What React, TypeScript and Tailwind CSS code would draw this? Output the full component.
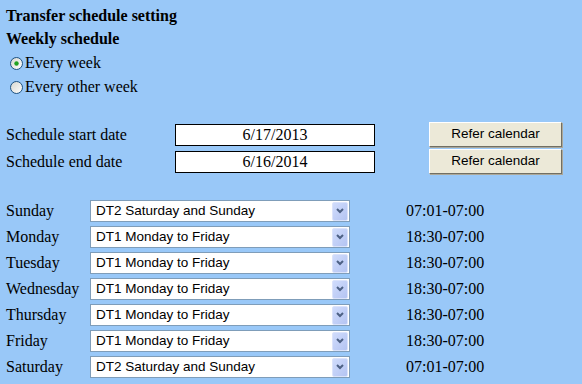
import { ReactNode } from "react";

type DayRow = {
  day: string;
  pattern: string;
  time: string;
};

const DAYS: DayRow[] = [
  { day: "Sunday", pattern: "DT2 Saturday and Sunday", time: "07:01-07:00" },
  { day: "Monday", pattern: "DT1 Monday to Friday", time: "18:30-07:00" },
  { day: "Tuesday", pattern: "DT1 Monday to Friday", time: "18:30-07:00" },
  { day: "Wednesday", pattern: "DT1 Monday to Friday", time: "18:30-07:00" },
  { day: "Thursday", pattern: "DT1 Monday to Friday", time: "18:30-07:00" },
  { day: "Friday", pattern: "DT1 Monday to Friday", time: "18:30-07:00" },
  { day: "Saturday", pattern: "DT2 Saturday and Sunday", time: "07:01-07:00" },
];

const serif = "font-['Liberation_Serif','Times_New_Roman',serif]";
const sans = "font-['Liberation_Sans',Arial,sans-serif]";

function Radio({ checked, children }: { checked?: boolean; children: ReactNode }) {
  const id = checked ? "rg1" : "rg2";
  return (
    <label className="flex h-[24px] items-center">
      <svg width="13" height="13" viewBox="0 0 13 13" className="ml-[4px] mr-[2px]">
        <defs>
          <linearGradient id={id} x1="0" y1="0" x2="1" y2="1">
            <stop offset="0" stopColor="#d6d6ce" />
            <stop offset="1" stopColor="#ffffff" />
          </linearGradient>
        </defs>
        <circle cx="6.5" cy="6.5" r="6" fill={`url(#${id})`} stroke="#1c5180" strokeWidth="1" />
        {checked && <circle cx="6.5" cy="6.5" r="2.2" fill="#21a121" />}
      </svg>
      <span>{children}</span>
    </label>
  );
}

function DateRow({ label, value }: { label: string; value: string }) {
  return (
    <div className="flex h-[27px] items-center">
      <span className="w-[169px]">{label}</span>
      <div className="flex h-[22px] w-[200px] items-center justify-center border border-black bg-white">
        {value}
      </div>
      <button
        className={`${sans} ml-[54px] h-[25px] w-[133px] border border-t-white border-l-white border-r-[#716f64] border-b-[#716f64] bg-[#ece9d8] text-[13.5px] text-black shadow-[1px_1px_0_#aca899]`}
      >
        Refer calendar
      </button>
    </div>
  );
}

function FakeSelect({ value }: { value: string }) {
  return (
    <div className="flex h-[22px] w-[260px] items-center border border-[#7f9db9] bg-white p-px">
      <span className={`${sans} flex-1 pl-[4px] text-[13.5px] text-black`}>{value}</span>
      <div className="flex h-[19px] w-[16px] items-center justify-center rounded-[2px] border border-[#dbe3fb] bg-gradient-to-br from-[#d0dcfc] to-[#b4c4f2]">
        <svg width="8" height="6" viewBox="0 0 8 6">
          <path d="M1 1 L4 4 L7 1" fill="none" stroke="#4d6185" strokeWidth="2" />
        </svg>
      </div>
    </div>
  );
}

export default function App() {
  return (
    <div className={`${serif} min-h-[384px] w-full bg-[#99c8f8] px-[6px] pt-[4px] text-[16px] text-black`}>
      <h1 className="h-[23px] font-bold leading-[23px]">Transfer schedule setting</h1>
      <h2 className="h-[23px] font-bold leading-[23px]">Weekly schedule</h2>

      <div className="mt-px">
        <Radio checked>Every week</Radio>
        <Radio>Every other week</Radio>
      </div>

      <div className="mt-[22px]">
        <DateRow label="Schedule start date" value="6/17/2013" />
        <DateRow label="Schedule end date" value="6/16/2014" />
      </div>

      <div className="mt-[23px]">
        {DAYS.map((d) => (
          <div key={d.day} className="flex h-[26px] items-center">
            <span className="w-[84px]">{d.day}</span>
            <FakeSelect value={d.pattern} />
            <span className="ml-[56px]">{d.time}</span>
          </div>
        ))}
      </div>
    </div>
  );
}
